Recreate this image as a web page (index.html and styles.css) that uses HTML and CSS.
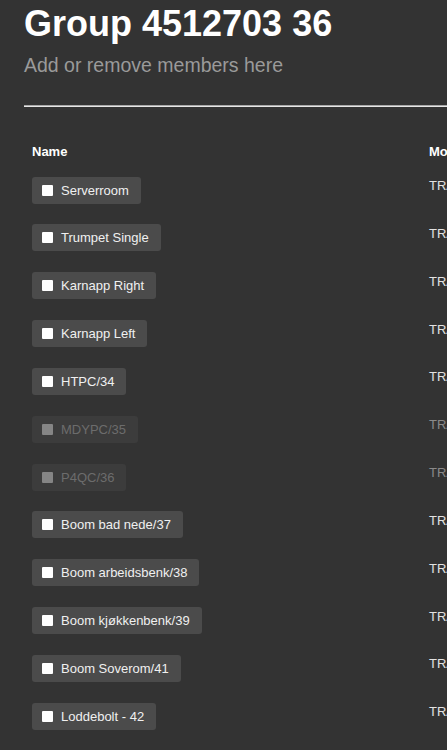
FILE: index.html
```html
<!DOCTYPE html>
<html lang="en">
<head>
<meta charset="utf-8">
<title>Group 4512703 36</title>
<link rel="stylesheet" href="styles.css">
</head>
<body>
<div class="page">
  <h1 class="title">Group 4512703 36</h1>
  <p class="subtitle">Add or remove members here</p>
  <hr class="divider">
  <div class="members">
    <div class="row head">
      <div class="cell">Name</div>
      <div class="cell">Model</div>
    </div>
    <div class="row">
      <div class="cell"><label class="member"><input type="checkbox" class="box"><span>Serverroom</span></label></div>
      <div class="cell model">TRADFRI bulb</div>
    </div>
    <div class="row">
      <div class="cell"><label class="member"><input type="checkbox" class="box"><span>Trumpet Single</span></label></div>
      <div class="cell model">TRADFRI bulb</div>
    </div>
    <div class="row">
      <div class="cell"><label class="member"><input type="checkbox" class="box"><span>Karnapp Right</span></label></div>
      <div class="cell model">TRADFRI bulb</div>
    </div>
    <div class="row">
      <div class="cell"><label class="member"><input type="checkbox" class="box"><span>Karnapp Left</span></label></div>
      <div class="cell model">TRADFRI bulb</div>
    </div>
    <div class="row">
      <div class="cell"><label class="member"><input type="checkbox" class="box"><span>HTPC/34</span></label></div>
      <div class="cell model">TRADFRI bulb</div>
    </div>
    <div class="row disabled">
      <div class="cell"><label class="member"><input type="checkbox" class="box" disabled><span>MDYPC/35</span></label></div>
      <div class="cell model">TRADFRI bulb</div>
    </div>
    <div class="row disabled">
      <div class="cell"><label class="member"><input type="checkbox" class="box" disabled><span>P4QC/36</span></label></div>
      <div class="cell model">TRADFRI bulb</div>
    </div>
    <div class="row">
      <div class="cell"><label class="member"><input type="checkbox" class="box"><span>Boom bad nede/37</span></label></div>
      <div class="cell model">TRADFRI bulb</div>
    </div>
    <div class="row">
      <div class="cell"><label class="member"><input type="checkbox" class="box"><span>Boom arbeidsbenk/38</span></label></div>
      <div class="cell model">TRADFRI bulb</div>
    </div>
    <div class="row">
      <div class="cell"><label class="member"><input type="checkbox" class="box"><span>Boom kjøkkenbenk/39</span></label></div>
      <div class="cell model">TRADFRI bulb</div>
    </div>
    <div class="row">
      <div class="cell"><label class="member"><input type="checkbox" class="box"><span>Boom Soverom/41</span></label></div>
      <div class="cell model">TRADFRI bulb</div>
    </div>
    <div class="row">
      <div class="cell"><label class="member"><input type="checkbox" class="box"><span>Loddebolt - 42</span></label></div>
      <div class="cell model">TRADFRI bulb</div>
    </div>
  </div>
</div>
</body>
</html>
```
FILE: styles.css
```css
html, body {
  margin: 0;
  padding: 0;
  overflow: hidden;
}
body {
  background: #333333;
  color: #ffffff;
  font-family: "Liberation Sans", Arial, sans-serif;
}
.page {
  width: 720px;
  padding: 4px 0 0 24px;
}
.title {
  margin: 0;
  font-size: 36px;
  line-height: 40px;
  font-weight: bold;
  color: #ffffff;
}
.subtitle {
  margin: 10px 0 0;
  font-size: 19.5px;
  line-height: 22px;
  color: #9a9a9a;
}
.divider {
  margin: 29px 0 0;
  height: 0;
  border: 0;
  border-top: 1px solid #a8a8a8;
  border-bottom: 1px solid #e6e6e6;
}
.members {
  padding: 37px 0 0 8px;
}
.row {
  display: grid;
  grid-template-columns: 397px auto;
  height: 47.85px;
  align-items: start;
}
.row.head {
  height: 15px;
  margin-bottom: 17.5px;
  font-size: 13px;
  line-height: 15px;
  font-weight: bold;
  color: #ffffff;
}
.cell {
  white-space: nowrap;
}
.model {
  padding-top: 1.5px;
  font-size: 13px;
  line-height: 15px;
  color: #e2e2e2;
}
.member {
  display: inline-flex;
  align-items: center;
  gap: 8px;
  height: 27px;
  padding: 0 12px 0 10px;
  background: #4b4b4b;
  border-radius: 3px;
  font-size: 13px;
  line-height: 15px;
  color: #f0f0f0;
}
.box {
  -webkit-appearance: none;
  appearance: none;
  margin: 0;
  width: 11px;
  height: 11px;
  background: #ffffff;
  border: 0;
  border-radius: 1px;
}
.disabled .member {
  background: #3c3c3c;
  color: #6c6c6c;
}
.disabled .box {
  background: #858585;
}
.disabled .model {
  color: #8a8a8a;
}
```
